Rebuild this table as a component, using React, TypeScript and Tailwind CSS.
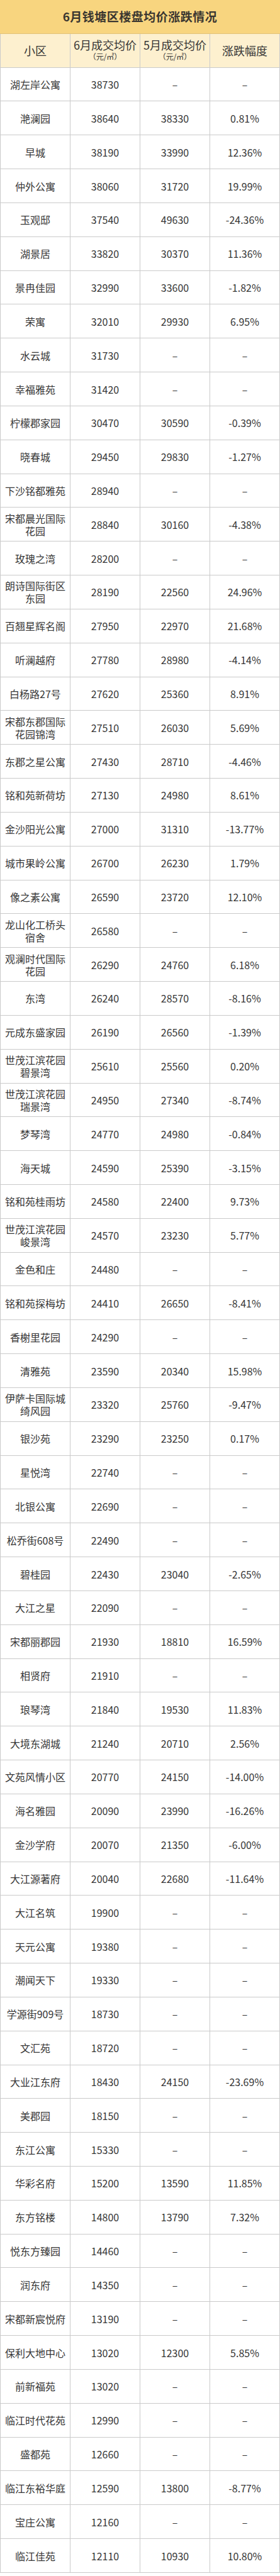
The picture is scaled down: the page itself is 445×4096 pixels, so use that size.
type Row = [string, string, string, string];

const rows: Row[] = [
  ["湖左岸公寓", "38730", "–", "–"],
  ["滟澜园", "38640", "38330", "0.81%"],
  ["早城", "38190", "33990", "12.36%"],
  ["仲外公寓", "38060", "31720", "19.99%"],
  ["玉观邸", "37540", "49630", "-24.36%"],
  ["湖景居", "33820", "30370", "11.36%"],
  ["景冉佳园", "32990", "33600", "-1.82%"],
  ["荣寓", "32010", "29930", "6.95%"],
  ["水云城", "31730", "–", "–"],
  ["幸福雅苑", "31420", "–", "–"],
  ["柠檬郡家园", "30470", "30590", "-0.39%"],
  ["晓春城", "29450", "29830", "-1.27%"],
  ["下沙铭都雅苑", "28940", "–", "–"],
  ["宋都晨光国际花园", "28840", "30160", "-4.38%"],
  ["玫瑰之湾", "28200", "–", "–"],
  ["朗诗国际街区东园", "28190", "22560", "24.96%"],
  ["百翘星辉名阁", "27950", "22970", "21.68%"],
  ["听澜越府", "27780", "28980", "-4.14%"],
  ["白杨路27号", "27620", "25360", "8.91%"],
  ["宋都东郡国际花园锦湾", "27510", "26030", "5.69%"],
  ["东郡之星公寓", "27430", "28710", "-4.46%"],
  ["铭和苑新荷坊", "27130", "24980", "8.61%"],
  ["金沙阳光公寓", "27000", "31310", "-13.77%"],
  ["城市果岭公寓", "26700", "26230", "1.79%"],
  ["像之素公寓", "26590", "23720", "12.10%"],
  ["龙山化工桥头宿舍", "26580", "–", "–"],
  ["观澜时代国际花园", "26290", "24760", "6.18%"],
  ["东湾", "26240", "28570", "-8.16%"],
  ["元成东盛家园", "26190", "26560", "-1.39%"],
  ["世茂江滨花园碧景湾", "25610", "25560", "0.20%"],
  ["世茂江滨花园瑞景湾", "24950", "27340", "-8.74%"],
  ["梦琴湾", "24770", "24980", "-0.84%"],
  ["海天城", "24590", "25390", "-3.15%"],
  ["铭和苑桂雨坊", "24580", "22400", "9.73%"],
  ["世茂江滨花园峻景湾", "24570", "23230", "5.77%"],
  ["金色和庄", "24480", "–", "–"],
  ["铭和苑探梅坊", "24410", "26650", "-8.41%"],
  ["香榭里花园", "24290", "–", "–"],
  ["清雅苑", "23590", "20340", "15.98%"],
  ["伊萨卡国际城绮风园", "23320", "25760", "-9.47%"],
  ["银沙苑", "23290", "23250", "0.17%"],
  ["星悦湾", "22740", "–", "–"],
  ["北银公寓", "22690", "–", "–"],
  ["松乔街608号", "22490", "–", "–"],
  ["碧桂园", "22430", "23040", "-2.65%"],
  ["大江之星", "22090", "–", "–"],
  ["宋都丽郡园", "21930", "18810", "16.59%"],
  ["相贤府", "21910", "–", "–"],
  ["琅琴湾", "21840", "19530", "11.83%"],
  ["大境东湖城", "21240", "20710", "2.56%"],
  ["文苑风情小区", "20770", "24150", "-14.00%"],
  ["海名雅园", "20090", "23990", "-16.26%"],
  ["金沙学府", "20070", "21350", "-6.00%"],
  ["大江源著府", "20040", "22680", "-11.64%"],
  ["大江名筑", "19900", "–", "–"],
  ["天元公寓", "19380", "–", "–"],
  ["潮闻天下", "19330", "–", "–"],
  ["学源街909号", "18730", "–", "–"],
  ["文汇苑", "18720", "–", "–"],
  ["大业江东府", "18430", "24150", "-23.69%"],
  ["美郡园", "18150", "–", "–"],
  ["东江公寓", "15330", "–", "–"],
  ["华彩名府", "15200", "13590", "11.85%"],
  ["东方铭楼", "14800", "13790", "7.32%"],
  ["悦东方臻园", "14460", "–", "–"],
  ["润东府", "14350", "–", "–"],
  ["宋都新宸悦府", "13190", "–", "–"],
  ["保利大地中心", "13020", "12300", "5.85%"],
  ["前新福苑", "13020", "–", "–"],
  ["临江时代花苑", "12990", "–", "–"],
  ["盛都苑", "12660", "–", "–"],
  ["临江东裕华庭", "12590", "13800", "-8.77%"],
  ["宝庄公寓", "12160", "–", "–"],
  ["临江佳苑", "12110", "10930", "10.80%"],
];

const cell =
  "flex h-[53.84px] flex-col items-center justify-center border-r border-b border-[#cacaca] text-center";

function HeadCell({ title, unit }: { title: string; unit?: boolean }) {
  return (
    <div className={`${cell} bg-[#fdf0cf] text-[18px] leading-[20px]`}>
      <span className="whitespace-nowrap">{title}</span>
      {unit && <span className="text-[12px] leading-[18px]">（元/㎡）</span>}
    </div>
  );
}

export default function App() {
  return (
    <div className="w-[445px] bg-white font-['Noto_Sans_CJK_SC','Noto_Sans',sans-serif] text-[#363636]">
      <div className="flex h-[53.84px] items-center justify-center border-b border-[#e2c37a] bg-[#f8d57f] text-[19px] font-bold tracking-[0.5px] text-[#3a3630]">
        6月钱塘区楼盘均价涨跌情况
      </div>
      <div className="grid grid-cols-4 border-l border-[#cacaca]">
        <HeadCell title="小区" />
        <HeadCell title="6月成交均价" unit />
        <HeadCell title="5月成交均价" unit />
        <HeadCell title="涨跌幅度" />
        {rows.map((r, i) =>
          r.map((v, j) => (
            <div
              key={`${i}-${j}`}
              className={`${cell} px-[6px] text-[16px] leading-[20px]`}
            >
              {v}
            </div>
          )),
        )}
      </div>
    </div>
  );
}
